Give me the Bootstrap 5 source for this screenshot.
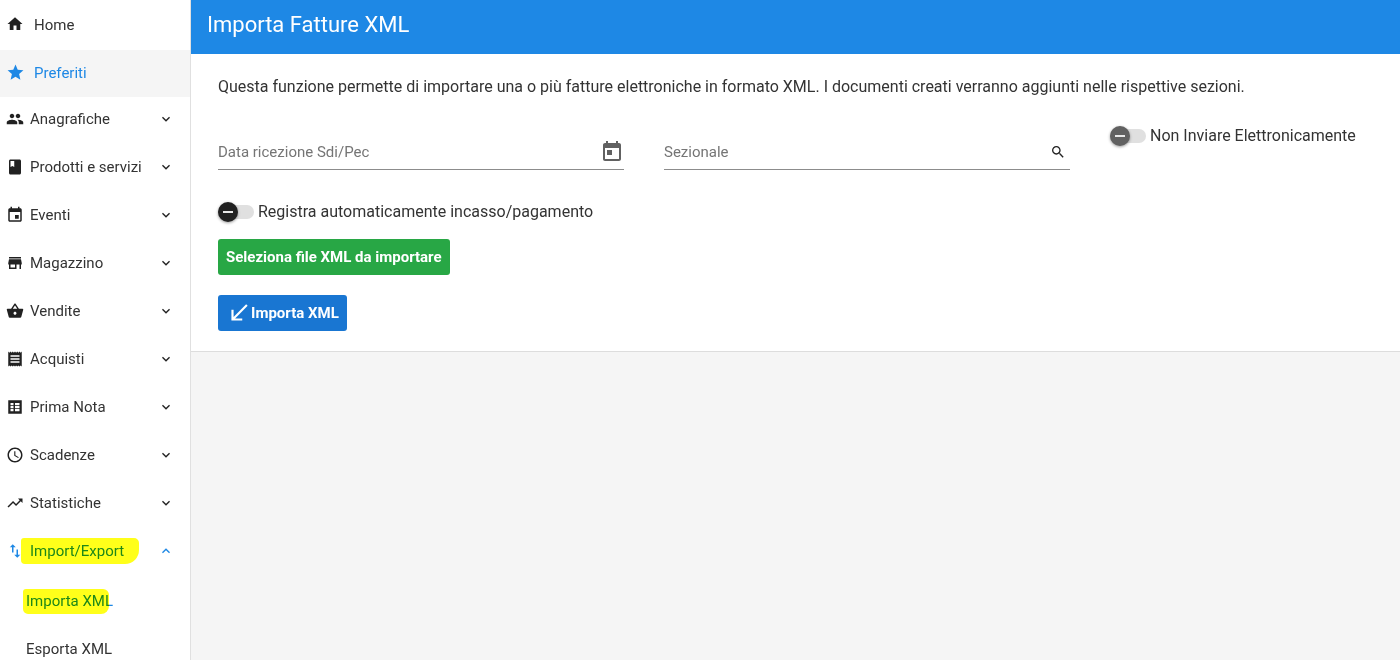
<!DOCTYPE html>
<html lang="it">
<head>
    <meta charset="UTF-8">
    <meta name="viewport" content="width=device-width, initial-scale=1.0">
    <title>Importa Fatture XML</title>
    <link href="https://cdn.jsdelivr.net/npm/bootstrap@5.3.0/dist/css/bootstrap.min.css" rel="stylesheet">
    <style>
        html, body { height: 100%; overflow: hidden; }
        body { font-family: Roboto, "Liberation Sans", sans-serif; background: #f5f5f5; color: #333; font-size: 15px; }
        .app-shell { height: 660px; }
        .side-menu { width: 191px; flex: none; background: #fff; border-right: 1px solid #e0e0e0; overflow: hidden; }
        .menu-row { height: 48px; display: flex; align-items: center; padding-left: 6px; padding-right: 16px; color: #333; flex: none; }
        .menu-row svg { fill: #212121; flex: none; }
        .menu-icon { width: 18px; height: 18px; margin-right: 6px; }
        .menu-top { height: 50px; }
        .menu-top .menu-icon { margin-right: 10px; margin-bottom: 3px; }
        .menu-fav { height: 47px; background: #f5f5f5; color: #1e88e5; }
        .menu-fav svg, .menu-open svg { fill: #1e88e5; }
        .menu-top.menu-fav .menu-icon { width: 19px; height: 19px; margin-right: 9px; }
        .menu-pull { margin-top: -2px; }
        .menu-chevron { width: 16px; height: 16px; margin-left: auto; }
        .menu-open { color: #1e88e5; }
        .menu-sub { padding-left: 26px; }
        .menu-sub-hl { margin-top: 2px; height: 48px; color: #1e88e5; }
        .marker-wrap { position: relative; }
        .marker-wrap::before { content: ""; position: absolute; background: #ffff1a; mix-blend-mode: multiply; }
        .marker-a::before { left: -9px; right: -15px; top: -2px; bottom: -2px; border-radius: 3px 5px 14px 4px; }
        .marker-b::before { left: -3px; right: 4px; top: -1px; bottom: -2px; border-radius: 3px 6px 8px 5px; }
        .page-head { height: 54px; background: #1e88e5; color: #fff; font-size: 22px; padding-left: 16px; display: flex; align-items: center; padding-bottom: 6px; }
        .page-body { background: #fff; height: 298px; border-bottom: 1px solid #ddd; padding: 24px 27px 0; }
        .intro-text { font-size: 16px; line-height: 18px; margin: 0 0 38px; }
        .field-box { width: 406px; height: 36px; border-bottom: 1px solid #8c8c8c; display: flex; align-items: center; justify-content: space-between; color: #757575; font-size: 15px; }
        .field-box span { padding-top: 2px; }
        .field-gap { gap: 40px; }
        .field-box svg { flex: none; }
        .switch-line { display: flex; align-items: center; gap: 4px; font-size: 16px; }
        .switch-track { position: relative; width: 36px; height: 14px; background: #e0e0e0; border-radius: 7px; flex: none; }
        .switch-thumb { position: absolute; left: 0; top: -3px; width: 20px; height: 20px; border-radius: 50%; background: #212121; box-shadow: 0 1px 3px rgba(0,0,0,.4); display: flex; align-items: center; justify-content: center; }
        .switch-thumb::after { content: ""; width: 10px; height: 2px; background: #e8e8e8; }
        .switch-grey .switch-thumb { background: #616161; }
        .switch-high { margin-top: -10px; align-self: flex-start; }
        .switch-second { margin-top: 30px; }
        .action-btn { height: 36px; display: inline-flex; align-items: center; border-radius: 3px; color: #fff; font-weight: 700; font-size: 15px; padding: 0 8px; border: 0; }
        .action-green { background: #28a745; margin-top: 15px; }
        .action-blue { background: #1976d2; margin-top: 20px; }
        .action-blue svg { fill: #fff; width: 26px; height: 26px; margin-right: -1px; }
    </style>
</head>
<body>
    <div class="d-flex app-shell">
        <!-- menu laterale -->
        <div class="side-menu d-flex flex-column">
            <div class="menu-row menu-top"><svg class="menu-icon" viewBox="0 0 24 24"><path d="M10 20v-6h4v6h5v-8h3L12 3 2 12h3v8z"/></svg>Home</div>
            <div class="menu-row menu-top menu-fav"><svg class="menu-icon" viewBox="0 0 24 24"><path d="M12 17.27L18.18 21l-1.64-7.03L22 9.24l-7.19-.61L12 2 9.19 8.63 2 9.24l5.46 4.73L5.82 21z"/></svg>Preferiti</div>
            <div class="menu-row menu-pull"><svg class="menu-icon" viewBox="0 0 24 24"><path d="M16 11c1.66 0 2.99-1.34 2.99-3S17.66 5 16 5c-1.66 0-3 1.34-3 3s1.34 3 3 3zm-8 0c1.66 0 2.99-1.34 2.99-3S9.66 5 8 5C6.34 5 5 6.34 5 8s1.34 3 3 3zm0 2c-2.33 0-7 1.17-7 3.5V19h14v-2.5c0-2.33-4.67-3.5-7-3.5zm8 0c-.29 0-.62.02-.97.05 1.16.84 1.97 1.97 1.97 3.45V19h6v-2.5c0-2.33-4.67-3.5-7-3.5z"/></svg>Anagrafiche<svg class="menu-chevron" viewBox="0 0 24 24"><path d="M16.59 8.59L12 13.17 7.41 8.59 6 10l6 6 6-6z"/></svg></div>
            <div class="menu-row"><svg class="menu-icon" viewBox="0 0 24 24"><path d="M18 2H6c-1.1 0-2 .9-2 2v16c0 1.1.9 2 2 2h12c1.1 0 2-.9 2-2V4c0-1.1-.9-2-2-2zM6 4h5v8l-2.5-1.5L6 12V4z"/></svg>Prodotti e servizi<svg class="menu-chevron" viewBox="0 0 24 24"><path d="M16.59 8.59L12 13.17 7.41 8.59 6 10l6 6 6-6z"/></svg></div>
            <div class="menu-row"><svg class="menu-icon" viewBox="0 0 24 24"><path d="M17 12h-5v5h5v-5zM16 1v2H8V1H6v2H5c-1.11 0-1.99.9-1.99 2L3 19c0 1.1.89 2 2 2h14c1.1 0 2-.9 2-2V5c0-1.1-.9-2-2-2h-1V1h-2zm3 18H5V8h14v11z"/></svg>Eventi<svg class="menu-chevron" viewBox="0 0 24 24"><path d="M16.59 8.59L12 13.17 7.41 8.59 6 10l6 6 6-6z"/></svg></div>
            <div class="menu-row"><svg class="menu-icon" viewBox="0 0 24 24"><path d="M20 4H4v2h16V4zm1 10v-2l-1-5H4l-1 5v2h1v6h10v-6h4v6h2v-6h1zm-9 4H6v-4h6v4z"/></svg>Magazzino<svg class="menu-chevron" viewBox="0 0 24 24"><path d="M16.59 8.59L12 13.17 7.41 8.59 6 10l6 6 6-6z"/></svg></div>
            <div class="menu-row"><svg class="menu-icon" viewBox="0 0 24 24"><path d="M17.21 9l-4.38-6.56c-.19-.28-.51-.42-.83-.42-.32 0-.64.14-.83.43L6.79 9H2c-.55 0-1 .45-1 1 0 .09.01.18.04.27l2.54 9.27c.23.84 1 1.46 1.92 1.46h13c.92 0 1.69-.62 1.93-1.46l2.54-9.27L23 10c0-.55-.45-1-1-1h-4.79zM9 9l3-4.4L15 9H9zm3 8c-1.1 0-2-.9-2-2s.9-2 2-2 2 .9 2 2-.9 2-2 2z"/></svg>Vendite<svg class="menu-chevron" viewBox="0 0 24 24"><path d="M16.59 8.59L12 13.17 7.41 8.59 6 10l6 6 6-6z"/></svg></div>
            <div class="menu-row"><svg class="menu-icon" viewBox="0 0 24 24"><path d="M18 17H6v-2h12v2zm0-4H6v-2h12v2zm0-4H6V7h12v2zM3 22l1.5-1.5L6 22l1.5-1.5L9 22l1.5-1.5L12 22l1.5-1.5L15 22l1.5-1.5L18 22l1.5-1.5L21 22V2l-1.5 1.5L18 2l-1.5 1.5L15 2l-1.5 1.5L12 2l-1.5 1.5L9 2 7.5 3.5 6 2 4.5 3.5 3 2v20z"/></svg>Acquisti<svg class="menu-chevron" viewBox="0 0 24 24"><path d="M16.59 8.59L12 13.17 7.41 8.59 6 10l6 6 6-6z"/></svg></div>
            <div class="menu-row"><svg class="menu-icon" viewBox="0 0 24 24"><path fill-rule="evenodd" d="M3 3h18v18H3zM6 6.500h4v3H6zM12 6.500h6v3h-6zM6 10.500h4v3H6zM12 10.500h6v3h-6zM6 14.500h4v3H6zM12 14.500h6v3h-6z"/></svg>Prima Nota<svg class="menu-chevron" viewBox="0 0 24 24"><path d="M16.59 8.59L12 13.17 7.41 8.59 6 10l6 6 6-6z"/></svg></div>
            <div class="menu-row"><svg class="menu-icon" viewBox="0 0 24 24"><path d="M11.99 2C6.47 2 2 6.48 2 12s4.47 10 9.99 10C17.52 22 22 17.52 22 12S17.52 2 11.99 2zM12 20c-4.42 0-8-3.58-8-8s3.58-8 8-8 8 3.58 8 8-3.58 8-8 8zm.5-13H11v6l5.25 3.15.75-1.23-4.5-2.67z"/></svg>Scadenze<svg class="menu-chevron" viewBox="0 0 24 24"><path d="M16.59 8.59L12 13.17 7.41 8.59 6 10l6 6 6-6z"/></svg></div>
            <div class="menu-row"><svg class="menu-icon" viewBox="0 0 24 24"><path d="M16 6l2.29 2.29-4.88 4.88-4-4L2 16.59 3.41 18l6-6 4 4 6.3-6.29L22 12V6z"/></svg>Statistiche<svg class="menu-chevron" viewBox="0 0 24 24"><path d="M16.59 8.59L12 13.17 7.41 8.59 6 10l6 6 6-6z"/></svg></div>
            <div class="menu-row menu-open"><svg class="menu-icon" viewBox="0 0 24 24"><path d="M9 3L5 6.99h3V14h2V6.99h3L9 3zm7 14.010V10h-2v7.010h-3L15 21l4-3.990h-3z"/></svg><span class="marker-wrap marker-a">Import/Export</span><svg class="menu-chevron" viewBox="0 0 24 24"><path d="M12 8l-6 6 1.41 1.41L12 10.830l4.590 4.580L18 14z"/></svg></div>
            <div class="menu-row menu-sub menu-sub-hl"><span class="marker-wrap marker-b">Importa XML</span></div>
            <div class="menu-row menu-sub">Esporta XML</div>
        </div>

        <!-- contenuto -->
        <div class="flex-grow-1">
            <div class="page-head">Importa Fatture XML</div>
            <div class="page-body">
                <p class="intro-text">Questa funzione permette di importare una o più fatture elettroniche in formato XML. I documenti creati verranno aggiunti nelle rispettive sezioni.</p>
                <div class="d-flex field-gap">
                    <div class="field-box">
                        <span>Data ricezione Sdi/Pec</span>
                        <svg width="24" height="24" viewBox="0 0 24 24" fill="#616161"><path d="M19 3h-1V1h-2v2H8V1H6v2H5c-1.110 0-1.990.9-1.990 2L3 19c0 1.100.89 2 2 2h14c1.100 0 2-.9 2-2V5c0-1.100-.9-2-2-2zm0 16H5V8h14v11zM7 10h5v5H7z"/></svg>
                    </div>
                    <div class="field-box">
                        <span>Sezionale</span>
                        <svg class="me-1" width="16" height="16" viewBox="0 0 24 24" fill="#212121"><path d="M15.500 14h-.79l-.28-.27C15.410 12.590 16 11.110 16 9.500 16 5.910 13.090 3 9.500 3S3 5.910 3 9.500 5.910 16 9.500 16c1.610 0 3.090-.59 4.230-1.570l.27.28v.79l5 4.990L20.490 19l-4.990-5zm-6 0C7.010 14 5 11.990 5 9.500S7.010 5 9.500 5 14 7.010 14 9.500 11.990 14 9.500 14z"/></svg>
                    </div>
                    <div class="switch-line switch-high switch-grey"><span class="switch-track"><span class="switch-thumb"></span></span><span>Non Inviare Elettronicamente</span></div>
                </div>
                <div class="switch-line switch-second"><span class="switch-track"><span class="switch-thumb"></span></span><span>Registra automaticamente incasso/pagamento</span></div>
                <div><button class="action-btn action-green">Seleziona file XML da importare</button></div>
                <div><button class="action-btn action-blue"><svg viewBox="0 0 24 24"><path d="M20 5.410L18.590 4 7 15.590V9H5v10h10v-2H8.410z"/></svg>Importa XML</button></div>
            </div>
        </div>
    </div>
    <script src="https://cdn.jsdelivr.net/npm/bootstrap@5.3.0/dist/js/bootstrap.bundle.min.js"></script>
</body>
</html>
